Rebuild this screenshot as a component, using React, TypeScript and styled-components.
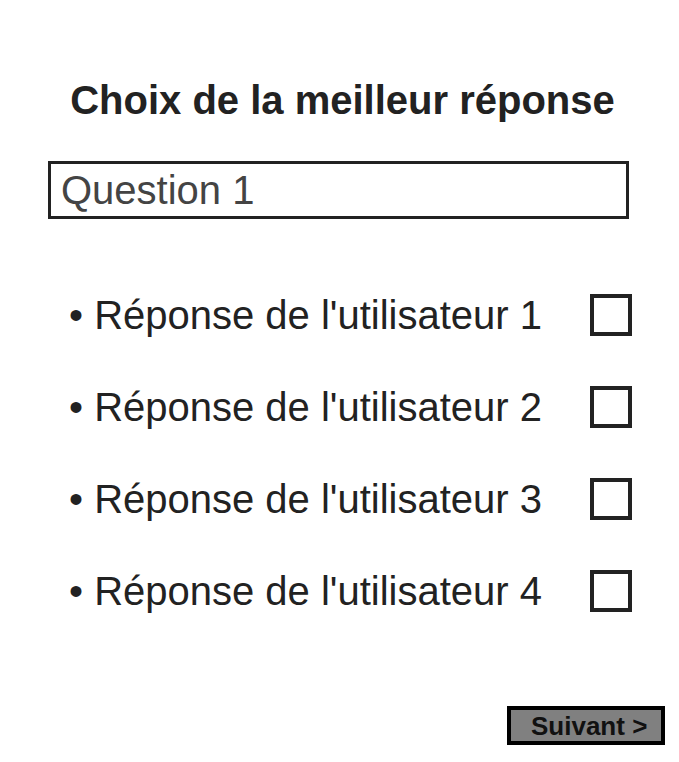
import React from 'react';
import styled, { createGlobalStyle } from 'styled-components';

const GlobalStyle = createGlobalStyle`
  html, body {
    margin: 0;
    padding: 0;
    background: #ffffff;
  }
  body {
    font-family: "Liberation Sans", Arial, sans-serif;
  }
`;

const Page = styled.div`
  width: 679px;
  box-sizing: border-box;
  padding: 77px 14px 0 48px;
  display: flex;
  flex-direction: column;
`;

const Title = styled.h1`
  margin: 0 0 38px -48px;
  padding-left: 6px;
  box-sizing: border-box;
  width: 679px;
  font-size: 40px;
  line-height: 46px;
  font-weight: 700;
  color: #222222;
  text-align: center;
`;

const QuestionBox = styled.div`
  width: 581px;
  height: 58px;
  box-sizing: border-box;
  border: 3px solid #222222;
  padding: 0 10px;
  display: flex;
  align-items: center;
  font-size: 40px;
  color: #444444;
`;

const Answers = styled.ul`
  list-style: none;
  margin: 75px 0 0;
  padding: 0;
  width: 584px;
  display: flex;
  flex-direction: column;
  gap: 50px;
`;

const AnswerRow = styled.li`
  display: flex;
  align-items: center;
  justify-content: space-between;
  height: 42px;
  padding-left: 21px;
`;

const AnswerText = styled.span`
  font-size: 40px;
  color: #222222;
  white-space: nowrap;
`;

const CheckBox = styled.span`
  width: 42px;
  height: 42px;
  box-sizing: border-box;
  border: 4px solid #222222;
  background: #ffffff;
`;

const NextButton = styled.button`
  align-self: flex-end;
  margin-top: 94px;
  width: 158px;
  height: 39px;
  box-sizing: border-box;
  border: 4px solid #000000;
  background: #808080;
  padding: 0 0 0 20px;
  text-align: left;
  font-family: "Liberation Sans", Arial, sans-serif;
  font-size: 26px;
  font-weight: 700;
  color: #111111;
  line-height: 1;
  cursor: pointer;
`;

const answers = [
  "Réponse de l'utilisateur 1",
  "Réponse de l'utilisateur 2",
  "Réponse de l'utilisateur 3",
  "Réponse de l'utilisateur 4",
];

const App: React.FC = () => {
  return (
    <>
      <GlobalStyle />
      <Page>
        <Title>Choix de la meilleur réponse</Title>
        <QuestionBox>Question 1</QuestionBox>
        <Answers>
          {answers.map((a) => (
            <AnswerRow key={a}>
              <AnswerText>• {a}</AnswerText>
              <CheckBox />
            </AnswerRow>
          ))}
        </Answers>
        <NextButton>Suivant &gt;</NextButton>
      </Page>
    </>
  );
};

export default App;
